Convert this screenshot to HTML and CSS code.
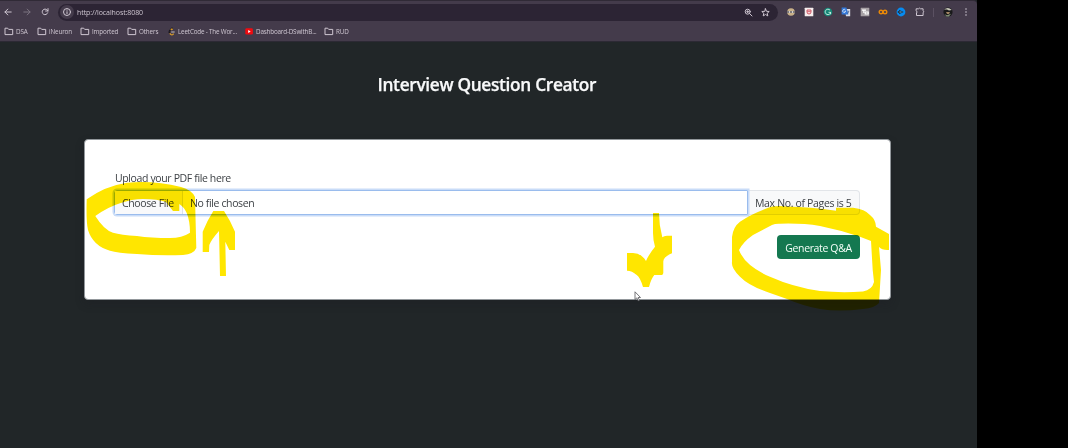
FILE: index.html
```html
<!DOCTYPE html>
<html lang="en">
<head>
<meta charset="utf-8">
<title>Interview Question Creator</title>
<link rel="stylesheet" href="styles.css">
</head>
<body>
<svg class="defs" width="0" height="0"><defs>
<symbol id="folder" viewBox="0 0 10 9"><path d="M1 1.2h2.7l1 1.2H8.7v5.2H1z" fill="none" stroke="currentColor" stroke-width="1" stroke-linejoin="round"/></symbol>
</defs></svg>
<div class="window">
  <header class="browser">
    <div class="toolbar">
      <div class="nav">
        <svg width="8" height="8" viewBox="0 0 8 8"><path d="M7.2 4H1M3.8 1.1L.9 4l2.9 2.9" class="line"/></svg>
        <svg class="dim" width="8" height="8" viewBox="0 0 8 8"><path d="M.8 4H7M4.2 1.1L7.1 4 4.2 6.9" class="line"/></svg>
        <svg width="8" height="8" viewBox="0 0 8 8"><path d="M6.7 4.8A2.8 2.8 0 1 1 6.2 2.1L7 3M7 .6V3H4.6" class="line"/></svg>
      </div>
      <div class="address">
        <span class="site"><svg width="10" height="10" viewBox="0 0 10 10"><circle cx="5" cy="5" r="3.5" class="line"/><path d="M5 4.7v2M5 3v.3" class="line"/></svg></span>
        <span class="url">http://localhost:8080</span>
        <svg class="zoom" width="9" height="9" viewBox="0 0 9 9"><circle cx="3.7" cy="3.7" r="2.5" class="line"/><path d="M5.6 5.6L8 8M2.7 3.7h2M3.7 2.7v2" class="line"/></svg>
        <svg width="9" height="9" viewBox="0 0 9 9"><path d="M4.5.8l1 2.5 2.7.2-2 1.8.6 2.6-2.3-1.4-2.3 1.4.6-2.6-2-1.8 2.7-.2z" class="line"/></svg>
      </div>
      <div class="extensions">
        <svg width="10" height="10" viewBox="0 0 10 10"><circle cx="5" cy="5" r="3.8" fill="#c9b188"/><path d="M1 5h8" stroke="#77757a" stroke-width="1.8"/><path d="M3 5h1M6 5h1" stroke="#eee" stroke-width="1.3"/></svg>
        <svg width="10" height="10" viewBox="0 0 10 10"><rect x=".7" y=".7" width="8.6" height="8.6" rx=".5" fill="#f6eeee"/><path d="M3 3v2q0 2 2 2t2-2V3z" fill="#f6d6d7" stroke="#c83a4b" stroke-width=".8"/><path d="M3.4 4.5h3.2" stroke="#c83a4b" stroke-width=".6"/></svg>
        <svg width="10" height="10" viewBox="0 0 10 10"><circle cx="5" cy="5" r="4.3" fill="#168777"/><path d="M7 3.2A2.7 2.7 0 1 0 7.6 5.3H5.5M7.6 5.3v2" fill="none" stroke="#e4fff5" stroke-width=".8"/></svg>
        <svg width="10" height="10" viewBox="0 0 10 10"><path d="M4 2h5.2v7.2H5z" fill="#d9dde6"/><path d="M.6.6h4.8l2 7H.6z" fill="#3378d8"/><path d="M4.4 3.1A1.5 1.5 0 1 0 4.6 4.3H3.4" fill="none" stroke="#fff" stroke-width=".7"/><path d="M6.3 4.2h2M7.3 4.2v1l-.7 1.6" stroke="#46639a" stroke-width=".7"/></svg>
        <svg width="10" height="10" viewBox="0 0 10 10"><rect x=".7" y=".7" width="8.6" height="8.6" rx=".4" fill="#a7a1a5"/><path d="M2 3.1h4M3.8 3v3M5.2 5h3v2H5.2z" fill="none" stroke="#fff" stroke-width="1.1"/></svg>
        <svg width="10" height="10" viewBox="0 0 10 10"><circle cx="3" cy="5" r="1.8" fill="none" stroke="#e98908" stroke-width="1.4"/><circle cx="7" cy="5" r="1.8" fill="none" stroke="#e98908" stroke-width="1.4"/></svg>
        <svg width="10" height="10" viewBox="0 0 10 10"><circle cx="5" cy="5" r="4.4" fill="#078bf0"/><path d="M3 2.7L7.8 5 3 7.3V6H1.8V4H3z" fill="#183956"/><path d="M3.5 5h2" stroke="#9bdcff" stroke-width=".7"/></svg>
        <svg width="10" height="10" viewBox="0 0 10 10"><path d="M1.5 1.8h2q1-1.4 2 0h2.6v2q1.4 1 0 2v2.7H1.5V6q1.4-1 0-2z" class="line"/></svg>
      </div>
      <span class="divider"></span>
      <svg class="avatar" width="10" height="10" viewBox="0 0 10 10"><circle cx="5" cy="5" r="4.6" fill="#19191b"/><path d="M1 2.6Q5-1 8.8 3L6 3.5 4 2.5z" fill="#c9c9bb"/><path d="M3 5h4L6 7H4z" fill="#a18462"/><path d="M1.5 7.3L4 8.2l4-1.4-2 2.6H3.5z" fill="#829176"/></svg>
      <svg class="menu" width="4" height="10" viewBox="0 0 4 10" fill="#c9c1cd"><circle cx="2" cy="2" r=".8"/><circle cx="2" cy="5" r=".8"/><circle cx="2" cy="8" r=".8"/></svg>
    </div>
    <nav class="bookmarks">
      <span class="bookmark"><svg class="icon"><use href="#folder"/></svg>DSA</span>
      <span class="bookmark"><svg class="icon"><use href="#folder"/></svg>iNeuron</span>
      <span class="bookmark"><svg class="icon"><use href="#folder"/></svg>Imported</span>
      <span class="bookmark"><svg class="icon"><use href="#folder"/></svg>Others</span>
      <span class="bookmark site-link"><svg class="icon" viewBox="0 0 10 9"><path d="M5.5.8L2.4 4" stroke="#171419" stroke-width="1.4"/><path d="M2.4 4.1q-.8 1.2.3 2.2" fill="none" stroke="#171419" stroke-width="1.2"/><path d="M5.8 2.5L4.8 2 3.7 3.2M2.7 6.3l1.2 1.2q1 .7 2 0l.7-.8" fill="none" stroke="#dc9e29" stroke-width="1.2"/><path d="M4.2 5h3.5" stroke="#c4bfc4"/></svg>LeetCode - The Wor...</span>
      <span class="bookmark site-link"><svg class="icon" viewBox="0 0 10 9"><rect x=".3" y="1.3" width="7.6" height="6.3" rx="1.4" fill="#f10b10"/><path d="M3.2 3v2.9l2.5-1.4z" fill="#fff"/></svg>Dashboard-DSwithB...</span>
      <span class="bookmark"><svg class="icon"><use href="#folder"/></svg>RUD</span>
    </nav>
  </header>
  <main class="page">
    <h1 class="title">Interview Question Creator</h1>
    <form class="card">
      <label class="label">Upload your PDF file here</label>
      <div class="upload">
        <div class="file"><span class="choose">Choose File</span><span class="chosen">No file chosen</span></div>
        <span class="limit">Max No. of Pages is 5</span>
      </div>
      <button class="generate" type="button">Generate Q&amp;A</button>
    </form>
  </main>
</div>
<svg class="marker" width="1068" height="448" viewBox="0 0 1068 448">
  <path fill-rule="evenodd" d="M86.7 199.3Q105 186 127 182.7Q153 180 181 187Q192 190 195 197L196.3 248Q194 254 183 255Q160 256 137 254Q117 253 110 250.7Q93 246 88 230Q86 222 86.7 199.3ZM95.3 216Q108 207 120 203.3Q132 199 143 199Q158 199 166 202L173 211H179.3V204Q184 207 186.7 213Q190 221 190 232.7Q182 238 170 238Q151 238 137 236Q121 235 113 232.7Q104 230 95.3 216Z"/>
  <path d="M213.3 211H224Q230 220 235 231.7V250H229.3L225.3 241.7L226 276H220L219 231Q211 240 209.3 245L209 252H202.7V231.7Q207 221 213.3 211Z"/>
  <path d="M653 213H659Q659 225 662.3 237.3Q664 235.7 667 235.7H672V253.3Q663 257 663.3 261.7V273Q663 275 661.7 275H654.3Q651 279 649 287H643Q640 277 636.7 275Q632 270.7 627 270.7V253H633Q641 253 646 261Q649 254 655 246.7Q653 240 653 233Z"/>
  <path fill-rule="evenodd" d="M732 237Q733 227 740 221.7Q751 214 767 208.3Q774 205 787 206.5Q810 207 836 210.7V207.7H853Q865 209 870 215Q876 220 876 226.7L889 234V250Q882 250.5 879 247L881 270L879 303Q875 308 863 309Q839 312 820 309Q803 306 787 299L770 293Q749 286 740 276.7Q731 268 732 262ZM739 250Q743 242 753 235L772 225Q775 223.5 780 223.7Q802 223 820 226Q840 230 860 236.7L871 241L872.7 270L874 282Q872 290 863 291.5Q841 293 820 291Q793 287 770 276.7Q745 266 739 250Z"/>
</svg>
<svg class="cursor" width="8" height="11" viewBox="0 0 8 11"><path d="M1 .8v7.8l1.8-1.7 1.4 2.9 1.2-.6L4.1 6.5h2.4z" fill="#fff" stroke="#55555b" stroke-width=".8"/></svg>
</body>
</html>
```
FILE: styles.css
```css
* { box-sizing: border-box; }
body { margin: 0; width: 1068px; height: 448px; overflow: hidden; position: relative; background: #000; font-family: "Open Sans", "Noto Sans", sans-serif; }
.defs { position: absolute; }
.window { width: 977px; height: 448px; background: #212628; }
.browser { height: 42px; background: #443b4b; color: #cec6d1; border-top: 1px solid #302a36; border-radius: 0 4px 0 0; border-bottom: 1px solid #2c2934; }
.line { fill: none; stroke: currentColor; stroke-width: 1; stroke-linecap: round; stroke-linejoin: round; }
.toolbar { height: 22px; display: flex; align-items: center; }
.nav { width: 58px; padding-left: 4px; display: flex; gap: 10.5px; }
.dim { opacity: .4; }
.address { width: 720px; height: 17px; border-radius: 9px; background: #2c2434; display: flex; align-items: center; padding: 0 8px 0 2px; }
.site { width: 14px; height: 14px; border-radius: 50%; background: #443b4b; display: grid; place-items: center; }
.url { font-size: 7px; margin-left: 3px; letter-spacing: -.08px; }
.zoom { margin-left: auto; margin-right: 8px; }
.extensions { display: flex; gap: 8.4px; margin-left: 8px; }
.divider { width: 1px; height: 9px; margin-left: 8px; background: #5b5162; }
.avatar { margin-left: 9px; }
.menu { margin-left: 11px; }
.bookmarks { height: 16px; display: grid; grid-template-columns: 33px 43px 47px 40px 78px 79px 40px; padding-left: 4px; align-items: center; font-size: 6.3px; letter-spacing: -.14px; white-space: nowrap; }
.bookmark { display: flex; align-items: center; height: 14px; }
.icon { width: 10px; height: 9px; margin-right: 2px; flex: none; }
.site-link .icon { margin-right: 1px; }
.site-link { letter-spacing: -.18px; }
.page { display: flex; flex-direction: column; align-items: center; padding-top: 30px; }
.title { margin: 0 3px 0 0; width: 219px; height: 24px; line-height: 25px; color: #f8f9fa; font-size: 17.3px; font-weight: 600; -webkit-text-stroke: .25px #f8f9fa; white-space: nowrap; letter-spacing: -.32px; }
.card { width: 807px; height: 161px; margin-top: 43px; margin-right: 2px; padding: 30px 30px 0 29px; background: #fff; border: 1px solid #92979b; border-radius: 4px; box-shadow: 0 4px 8px #191c2044; color: #3d4145; font-size: 10.5px; letter-spacing: -.37px; display: flex; flex-direction: column; }
.label { height: 15px; line-height: 17px; padding-left: 1px; }
.upload { height: 25px; margin-top: 5px; display: flex; }
.file { width: 634px; display: flex; align-items: center; border: 1px solid #9abced; border-radius: 3px 0 0 3px; box-shadow: 0 0 0 1.5px #c9dcf8; position: relative; }
.choose { height: 23px; width: 68px; line-height: 24px; padding-left: 7px; background: #f8f9fb; border-right: 1px solid #dee2e6; white-space: nowrap; }
.chosen { padding-left: 7px; line-height: 24px; }
.limit { width: 112px; line-height: 24px; padding-left: 7px; background: #f8f9fa; border: 1px solid #e2e5e9; border-left: 0; border-radius: 0 4px 4px 0; white-space: nowrap; letter-spacing: -.34px; }
.generate { width: 83px; height: 24px; margin-top: 20px; align-self: flex-end; padding: 1px 0 0; border: 0; border-radius: 4px; background: #147850; color: #f5fff9; font: 10.5px "Open Sans", "Noto Sans", sans-serif; letter-spacing: -.37px; }
.marker { position: absolute; left: 0; top: 0; fill: #ffe600; mix-blend-mode: multiply; }
.cursor { position: absolute; left: 634px; top: 291px; }
```
